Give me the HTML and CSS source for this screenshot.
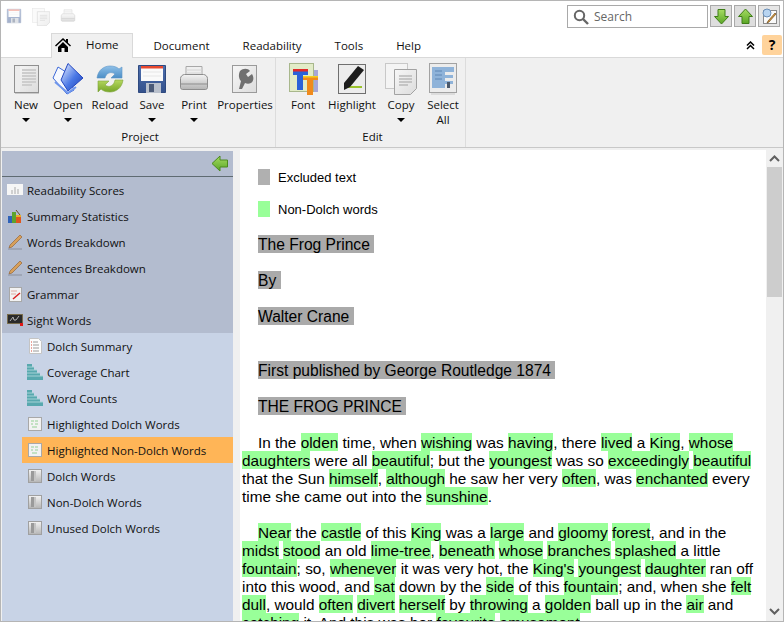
FILE: index.html
```html
<!DOCTYPE html>
<html lang="en">
<head>
  <meta charset="UTF-8" />
  <title>Readability Studio</title>
  <link rel="stylesheet" href="styles.css">
</head>
<body>

  <svg class="defs" width="0" height="0">
    <defs>
      <linearGradient id="gPage" x1="0" y1="0" x2="1" y2="1"><stop offset="0" stop-color="#f7f7f7"/><stop offset="1" stop-color="#dcdcdc"/></linearGradient>
      <linearGradient id="gBlue" x1="0" y1="0" x2="1" y2="1"><stop offset="0" stop-color="#eef3ff"/><stop offset=".55" stop-color="#4a78e6"/><stop offset="1" stop-color="#1c3fb0"/></linearGradient>
      <linearGradient id="gSky" x1="0" y1="0" x2="0" y2="1"><stop offset="0" stop-color="#8fc0e8"/><stop offset="1" stop-color="#4c8ec6"/></linearGradient>
      <linearGradient id="gLime" x1="0" y1="0" x2="0" y2="1"><stop offset="0" stop-color="#b6d860"/><stop offset="1" stop-color="#76a528"/></linearGradient>
      <linearGradient id="gGrey" x1="0" y1="0" x2="0" y2="1"><stop offset="0" stop-color="#f4f4f4"/><stop offset="1" stop-color="#b4b4b4"/></linearGradient>
      <linearGradient id="gFloppy" x1="0" y1="0" x2="0" y2="1"><stop offset="0" stop-color="#4d6fae"/><stop offset="1" stop-color="#34518c"/></linearGradient>
      <linearGradient id="gArrow" x1="0" y1="0" x2="0" y2="1"><stop offset="0" stop-color="#a6dc62"/><stop offset="1" stop-color="#5aa626"/></linearGradient>

      <symbol id="i-new" viewBox="0 0 32 32">
        <rect x="4.500" y="2.500" width="24" height="27" fill="url(#gPage)" stroke="#909090"/>
        <rect x="5" y="3" width="5" height="26" fill="#ececec"/>
        <path d="M12 7h14M12 10h14M12 13h14M12 16h14M12 19h14M12 22h10" stroke="#cdcdcd" stroke-width="2"/>
        <path d="M5 30.500h24" stroke="#c8c8c8"/>
      </symbol>
      <symbol id="i-open" viewBox="0 0 32 32">
        <path d="M1 15 6 4l8 5 8 18-7 4z" fill="#f6f9ff" stroke="#3c68d8"/>
        <path d="M16 .5 31 15 16 28 9 17z" fill="url(#gBlue)" stroke="#2447c0"/>
        <path d="M3 19l13 11 8-6" fill="none" stroke="#6f96ec" stroke-width="2"/>
      </symbol>
      <symbol id="i-reload" viewBox="0 0 32 32">
        <path d="M3 15C4 7 10 3 16 3c4 0 7 1 9 3l3-2v11H17l4-4c-4-3-9-1-10 4z" fill="url(#gSky)" stroke="#5b94c6" stroke-width=".6"/>
        <path d="M29 17c-1 8-7 12-13 12-4 0-7-1-9-3l-3 3V18h11l-4 4c4 3 9 1 10-5z" fill="url(#gLime)" stroke="#7ea53a" stroke-width=".6"/>
      </symbol>
      <symbol id="i-save" viewBox="0 0 32 32">
        <path d="M2.500 2.500h27v27h-27z" fill="url(#gFloppy)" stroke="#2f4a80"/>
        <rect x="5" y="3" width="22" height="15" fill="#fafafa"/>
        <rect x="5" y="3" width="22" height="2.500" fill="#e8492f"/>
        <path d="M7 9h18M7 13h18" stroke="#e6e6e6"/>
        <rect x="10" y="20" width="15" height="10" fill="#b9c0cc"/>
        <rect x="13" y="21" width="5" height="8" fill="#4b5a78"/>
      </symbol>
      <symbol id="i-print" viewBox="0 0 32 32">
        <path d="M8 3.500h16v12H8z" fill="#efefef" stroke="#a8a8a8"/>
        <path d="M2.500 15.500c0-2 2-4 4-4h19c2 0 4 2 4 4v9c0 1-1 2-2 2h-23c-1 0-2-1-2-2z" fill="url(#gGrey)" stroke="#8d8d8d"/>
        <path d="M3 21h26" stroke="#8d8d8d"/>
        <path d="M8 7h16M8 10h16" stroke="#d4d4d4"/>
      </symbol>
      <symbol id="i-props" viewBox="0 0 32 32">
        <rect x="3.500" y="2.500" width="24" height="27" fill="url(#gPage)" stroke="#9a9a9a"/>
        <path d="M11 8c3-3 8-3 10 0l-4 3 2 3 4-3c2 3 2 7-1 9-2 1-4 1-6 0l-3 6h-3l2-8c-2-2-3-6-1-10z" fill="#707070"/>
      </symbol>
      <symbol id="i-font" viewBox="0 0 32 32">
        <rect x="2.500" y=".5" width="24" height="28" fill="#e2ecc8" stroke="#a8b78c"/>
        <rect x="27" y="7" width="4" height="22" fill="#a7a7d8"/>
        <path d="M6 6h15v6h-5v15h-6V12H6z" fill="#2a62d8"/>
        <path d="M6 6h15v2.500H6z" fill="#e02a2a"/>
        <path d="M16 13h15v4h-5v15h-6V17h-4z" fill="#f08a1c"/>
        <path d="M16 13h15v1.500H16z" fill="#f4d020"/>
      </symbol>
      <symbol id="i-highlight" viewBox="0 0 32 32">
        <rect x="2.500" y="1.500" width="27" height="29" fill="#ececec" stroke="#6f6f6f"/>
        <path d="M15 23h11v2H9z" fill="#9ac22c"/>
        <path d="M22 3l6 4-14 17-6 3v-7z" fill="#1d1d1d"/>
      </symbol>
      <symbol id="i-copy" viewBox="0 0 32 32">
        <rect x=".5" y=".5" width="22" height="25" fill="#f4f4f4" stroke="#c8c8c8"/>
        <path d="M9.500 6.500h22v19l-6 6h-16z" fill="url(#gPage)" stroke="#a2a2a2"/>
        <path d="M14 13h13M14 16h13M14 19h13M14 22h9" stroke="#b9b9b9" stroke-width="1.500"/>
      </symbol>
      <symbol id="i-select" viewBox="0 0 32 32">
        <rect x="2.500" y=".5" width="27" height="29" fill="#ececec" stroke="#a2a2a2"/>
        <path d="M5 4h22v5H18v3h8v3h-8v3h8v3h-8v4H5z" fill="#8fb3d9"/>
        <path d="M8 8h7M8 12h7M8 16h7" stroke="#5f86b4"/>
        <path d="M20 19h3v6h-3z" fill="#4c5a6c"/>
        <path d="M4 31h24" stroke="#c8c8c8"/>
      </symbol>

      <symbol id="s-chart" viewBox="0 0 16 16">
        <rect y="2" width="16" height="11" fill="#f6f6f6"/>
        <path d="M5 12V8M8 12V5M11 12V7" stroke="#c4c4c4" stroke-width="1.500"/>
      </symbol>
      <symbol id="s-stats" viewBox="0 0 16 16">
        <rect x="1" y="8" width="4" height="7" fill="#2f62b8"/>
        <rect x="5" y="4" width="4" height="11" fill="#5ea32c"/>
        <rect x="9" y="9" width="5" height="6" fill="#e0561c"/>
        <path d="M9 2l4 5" stroke="#6a4a20"/>
        <rect x="9" y="7" width="5" height="2" fill="#e8b02a"/>
      </symbol>
      <symbol id="s-pencil" viewBox="0 0 16 16">
        <path d="M13 1l2 2L5 13l-3 1 1-3z" fill="#d8a05a" stroke="#8c5a2c" stroke-width=".6"/>
        <path d="M1 15h14" stroke="#8a8f9c"/>
      </symbol>
      <symbol id="s-grammar" viewBox="0 0 16 16">
        <rect x="2.500" y="1.500" width="12" height="14" fill="#f2f2f2" stroke="#a8a8a8"/>
        <path d="M4 5h6M4 8h5" stroke="#e0a8a0"/>
        <path d="M6 13l7-6" stroke="#d81e1e" stroke-width="1.500"/>
      </symbol>
      <symbol id="s-sight" viewBox="0 0 16 16">
        <rect x=".5" y="2.500" width="15" height="9" fill="#2a2a2a" stroke="#7a6a40" stroke-width=".8"/>
        <path d="M3 9l3-4 1 3 2 0 3-4" stroke="#b4b4b4" fill="none"/>
        <rect x="13" y="11" width="3" height="3" fill="#e01818"/>
      </symbol>
      <symbol id="s-doc" viewBox="0 0 16 16">
        <path d="M2.500 .5h9l3 3v12h-12z" fill="#fdfdfd" stroke="#c4c4c4"/>
        <path d="M4 4h1M4 7h1M4 10h1M4 13h1" stroke="#d84a3a"/>
        <path d="M6 4h5M6 7h6M6 10h6M6 13h6" stroke="#9a9a9a"/>
      </symbol>
      <symbol id="s-steps" viewBox="0 0 16 16">
        <path d="M0 0h5v3h2v3h3v3h3v3h3v4H0z" fill="#58a8ae"/>
        <path d="M0 3h7M0 6h10M0 9h13M0 12h16" stroke="#a5d2d6"/>
      </symbol>
      <symbol id="s-high" viewBox="0 0 16 16">
        <rect x="1.500" y="1.500" width="13" height="13" fill="#f2f2f2" stroke="#a8a8a8"/>
        <path d="M4 5h3M8 5h3M4 8h2M8 8h3M5 11h5" stroke="#b4dcb4" stroke-width="1.500"/>
      </symbol>
      <symbol id="s-list" viewBox="0 0 16 16">
        <rect x="1.500" y="1.500" width="13" height="13" fill="url(#gGrey)" stroke="#a0a0a0"/>
        <path d="M4 3h3v10H4z" fill="#9a9a9a"/>
        <path d="M7 3h2v10H7z" fill="#c4c4c4"/>
      </symbol>
    </defs>
  </svg>

  <div class="window">

    <div class="topbar">
      <svg class="quick fade" width="16" height="16"><use href="#i-save"/></svg>
      <svg class="quick fade" width="18" height="18"><use href="#i-copy"/></svg>
      <svg class="quick fade" width="16" height="16"><use href="#i-print"/></svg>
      <div class="search">
        <svg width="16" height="16" viewBox="0 0 16 16">
          <circle cx="6.500" cy="6.500" r="4.700" fill="none" stroke="#666" stroke-width="2"/>
          <path d="M10 10l5 5" stroke="#666" stroke-width="2.400"/>
        </svg>
        <span>Search</span>
      </div>
      <button class="tool-btn">
        <svg width="17" height="17" viewBox="0 0 17 17"><path d="M5 1.500h7v7h3.500l-7 7.500-7-7.500H5z" fill="url(#gArrow)" stroke="#3f7d18"/></svg>
      </button>
      <button class="tool-btn">
        <svg width="17" height="17" viewBox="0 0 17 17"><path d="M5 15.500h7v-7h3.500l-7-7.500-7 7.500H5z" fill="url(#gArrow)" stroke="#3f7d18"/></svg>
      </button>
      <button class="tool-btn">
        <svg width="18" height="18" viewBox="0 0 18 18">
          <rect x="3.500" y="3.500" width="13" height="13" fill="#fafafa" stroke="#8a8a8a"/>
          <circle cx="7" cy="6" r="4" fill="#b8d4f0" stroke="#6a8fb8"/>
          <path d="M16 7l-7 8-2 1 1-2 7-8z" fill="#d89a3c" stroke="#5a3a10" stroke-width=".6"/>
        </svg>
      </button>
    </div>

    <div class="tabs">
      <div class="tab tab-home">
        <svg width="16" height="16" viewBox="0 0 16 16"><path d="M8 1 0 8.500l1 1L8 3l7 6.500 1-1-3-2.800V2h-2v1.800zM3 10v5h3.500v-4h3v4H13v-5L8 5z" fill="#000"/></svg>
        <span>Home</span>
      </div>
      <div class="tab">Document</div>
      <div class="tab">Readability</div>
      <div class="tab">Tools</div>
      <div class="tab">Help</div>
      <div class="tab-right">
        <svg width="9" height="9" viewBox="0 0 9 9"><path d="M1 4.500 4.500 1 8 4.500M1 8l3.500-3.500L8 8" fill="none" stroke="#000" stroke-width="1.500"/></svg>
        <div class="help-btn">?</div>
      </div>
    </div>

    <div class="ribbon">
      <div class="group group-project">
        <div class="group-btns">
          <div class="rbtn w42"><svg class="ricon"><use href="#i-new"/></svg><span>New</span><i class="caret"></i></div>
          <div class="rbtn w42"><svg class="ricon"><use href="#i-open"/></svg><span>Open</span><i class="caret"></i></div>
          <div class="rbtn w42"><svg class="ricon"><use href="#i-reload"/></svg><span>Reload</span></div>
          <div class="rbtn w42"><svg class="ricon"><use href="#i-save"/></svg><span>Save</span><i class="caret"></i></div>
          <div class="rbtn w42"><svg class="ricon"><use href="#i-print"/></svg><span>Print</span><i class="caret"></i></div>
          <div class="rbtn w60"><svg class="ricon"><use href="#i-props"/></svg><span>Properties</span></div>
        </div>
        <div class="group-label">Project</div>
      </div>
      <div class="group group-edit">
        <div class="group-btns">
          <div class="rbtn w46"><svg class="ricon"><use href="#i-font"/></svg><span>Font</span></div>
          <div class="rbtn w52"><svg class="ricon"><use href="#i-highlight"/></svg><span>Highlight</span></div>
          <div class="rbtn w46"><svg class="ricon"><use href="#i-copy"/></svg><span>Copy</span><i class="caret"></i></div>
          <div class="rbtn w38"><svg class="ricon"><use href="#i-select"/></svg><span>Select All</span></div>
        </div>
        <div class="group-label">Edit</div>
      </div>
    </div>

    <div class="main">
      <div class="sidebar">
        <div class="side-head">
          <svg width="18" height="17" viewBox="0 0 18 17"><path d="M16.500 5H9V1L1 8.500 9 16v-4h7.500z" fill="url(#gArrow)" stroke="#4c8a1e"/></svg>
        </div>
        <div class="nav-top">
          <div class="nav-item"><svg width="16" height="16"><use href="#s-chart"/></svg>Readability Scores</div>
          <div class="nav-item"><svg width="16" height="16"><use href="#s-stats"/></svg>Summary Statistics</div>
          <div class="nav-item"><svg width="16" height="16"><use href="#s-pencil"/></svg>Words Breakdown</div>
          <div class="nav-item"><svg width="16" height="16"><use href="#s-pencil"/></svg>Sentences Breakdown</div>
          <div class="nav-item"><svg width="16" height="16"><use href="#s-grammar"/></svg>Grammar</div>
          <div class="nav-item"><svg width="16" height="16"><use href="#s-sight"/></svg>Sight Words</div>
        </div>
        <div class="nav-sub">
          <div class="nav-item"><svg width="16" height="16"><use href="#s-doc"/></svg>Dolch Summary</div>
          <div class="nav-item"><svg width="16" height="16"><use href="#s-steps"/></svg>Coverage Chart</div>
          <div class="nav-item"><svg width="16" height="16"><use href="#s-steps"/></svg>Word Counts</div>
          <div class="nav-item"><svg width="16" height="16"><use href="#s-high"/></svg>Highlighted Dolch Words</div>
          <div class="nav-item selected"><svg width="16" height="16"><use href="#s-high"/></svg>Highlighted Non-Dolch Words</div>
          <div class="nav-item"><svg width="16" height="16"><use href="#s-list"/></svg>Dolch Words</div>
          <div class="nav-item"><svg width="16" height="16"><use href="#s-list"/></svg>Non-Dolch Words</div>
          <div class="nav-item"><svg width="16" height="16"><use href="#s-list"/></svg>Unused Dolch Words</div>
        </div>
      </div>

      <div class="doc">
        <div class="legend"><i class="swatch grey"></i><span>Excluded text</span></div>
        <div class="legend"><i class="swatch green"></i><span>Non-Dolch words</span></div>

        <p class="excl"><span>The Frog Prince&nbsp;</span></p>
        <p class="excl"><span>By&nbsp;</span></p>
        <p class="excl"><span>Walter Crane&nbsp;</span></p>
        <p class="excl spaced"><span>First published by George Routledge 1874&nbsp;</span></p>
        <p class="excl"><span>THE FROG PRINCE&nbsp;</span></p>

        <p class="story">In the <mark>olden</mark> time, when <mark>wishing</mark> was <mark>having</mark>, there <mark>lived</mark> a <mark>King</mark>, <mark>whose</mark> <mark>daughters</mark> were all <mark>beautiful</mark>; but the <mark>youngest</mark> was so <mark>exceedingly</mark> <mark>beautiful</mark> that the Sun <mark>himself</mark>, <mark>although</mark> he saw her very <mark>often</mark>, was <mark>enchanted</mark> every time she came out into the <mark>sunshine</mark>.</p>

        <p class="story"><mark>Near</mark> the <mark>castle</mark> of this <mark>King</mark> was a <mark>large</mark> and <mark>gloomy</mark> <mark>forest</mark>, and in the <mark>midst</mark> <mark>stood</mark> an old <mark>lime-tree</mark>, <mark>beneath</mark> <mark>whose</mark> <mark>branches</mark> <mark>splashed</mark> a little <mark>fountain</mark>; so, <mark>whenever</mark> it was very hot, the <mark>King's</mark> <mark>youngest</mark> <mark>daughter</mark> ran off into this wood, and <mark>sat</mark> down by the <mark>side</mark> of this <mark>fountain</mark>; and, when she <mark>felt</mark> <mark>dull</mark>, would <mark>often</mark> <mark>divert</mark> <mark>herself</mark> by <mark>throwing</mark> a <mark>golden</mark> ball up in the <mark>air</mark> and <mark>catching</mark> it. And this was her <mark>favourite</mark> <mark>amusement</mark>.</p>
      </div>

      <div class="scrollbar">
        <svg width="11" height="7" viewBox="0 0 11 7"><path d="M1 6 5.500 1.500 10 6" fill="none" stroke="#606060" stroke-width="2"/></svg>
        <div class="track"><div class="thumb"></div></div>
        <svg width="11" height="7" viewBox="0 0 11 7"><path d="M1 1l4.500 4.500L10 1" fill="none" stroke="#606060" stroke-width="2"/></svg>
      </div>
    </div>
  </div>

</body>
</html>
```

FILE: styles.css
```css
* {
  box-sizing: border-box;
}

body {
  margin: 0;
  font-family: 'Open Sans', 'Noto Sans', sans-serif;
  font-size: 11.5px;
  color: #111;
}

.defs {
  display: block;
  height: 0;
}

.window {
  width: 784px;
  height: 622px;
  border: 1px solid #b5b5b5;
  display: flex;
  flex-direction: column;
  overflow: hidden;
  background: #fff;
}

/* top bar */
.topbar {
  height: 32px;
  flex: none;
  display: flex;
  align-items: flex-start;
  padding: 4px 3px 0 5px;
}

.quick {
  margin: 3px 10px 0 0;
}

.fade {
  opacity: 0.45;
}

.search {
  margin-left: auto;
  width: 141px;
  height: 23px;
  border: 1px solid #a9a9a9;
  display: flex;
  align-items: center;
  gap: 5px;
  padding-left: 5px;
  color: #666;
  font-size: 12px;
}

.tool-btn {
  width: 22px;
  height: 22px;
  margin-left: 2px;
  padding: 0;
  border: 1px solid #a9a9a9;
  background: #dedede;
  display: flex;
  align-items: center;
  justify-content: center;
}

.tool-btn:last-child {
  background: #e6e6e6;
}

/* tabs */
.tabs {
  height: 24px;
  flex: none;
  display: flex;
  align-items: center;
  padding-left: 50px;
}

.tab {
  padding: 0 16.5px;
}

.tab-home {
  align-self: stretch;
  height: 25px;
  width: 82px;
  margin-right: 4px;
  padding: 3px 0 0 3px;
  display: flex;
  align-items: flex-start;
  background: #f0f0f0;
  border: 1px solid #d9d9d9;
  border-bottom: none;
  position: relative;
}

.tab-home span {
  margin: 0 0 0 15px;
}

.tab-right {
  margin-left: auto;
  display: flex;
  align-items: center;
  gap: 7px;
  padding-right: 1px;
}

.help-btn {
  width: 20px;
  height: 20px;
  background: #ffd39b;
  border-radius: 2px;
  text-align: center;
  font-weight: bold;
  font-size: 14px;
  line-height: 20px;
  color: #000;
}

/* ribbon */
.ribbon {
  height: 91px;
  flex: none;
  display: flex;
  background: #f0f0f0;
  border-top: 1px solid #d9d9d9;
  border-bottom: 1px solid #c8c8c8;
  padding-left: 4px;
}

.group {
  display: flex;
  flex-direction: column;
  border-right: 1px solid #dcdcdc;
  padding-top: 5px;
}

.group-project {
  width: 271px;
}

.group-edit {
  width: 190px;
  padding-left: 4px;
}

.group-btns {
  display: flex;
  height: 64px;
}

.group-label {
  margin-top: 3px;
  text-align: center;
  line-height: 14px;
}

.rbtn {
  display: flex;
  flex-direction: column;
  align-items: center;
  text-align: center;
  line-height: 15px;
}

.w38 { width: 38px; }
.w42 { width: 42px; }
.w46 { width: 46px; }
.w52 { width: 52px; }
.w60 { width: 60px; }

.ricon {
  width: 32px;
  height: 32px;
  margin-bottom: 2px;
  flex: none;
}

.caret {
  width: 0;
  height: 0;
  margin-top: 6px;
  border-left: 4px solid transparent;
  border-right: 4px solid transparent;
  border-top: 4px solid #000;
}

/* main area */
.main {
  flex: 1;
  min-height: 0;
  display: flex;
  padding-top: 2px;
  background: #f0f0f0;
}

.sidebar {
  width: 231px;
  flex: none;
  margin: 1px 7px 0 1px;
  display: flex;
  flex-direction: column;
}

.side-head {
  height: 26px;
  flex: none;
  background: #b3bccf;
  border-bottom: 1px solid #5f6b72;
  display: flex;
  justify-content: flex-end;
  align-items: center;
  padding-right: 4px;
}

.nav-top {
  background: #b3bccf;
  flex: none;
}

.nav-sub {
  background: #c8d3e6;
  flex: 1;
  padding-left: 20px;
}

.nav-item {
  height: 26px;
  display: flex;
  align-items: center;
  gap: 4px;
  padding-left: 5px;
}

.nav-item svg {
  flex: none;
}

.nav-item.selected {
  background: #ffb557;
}

/* document */
.doc {
  width: 526px;
  flex: none;
  background: #fff;
  overflow: hidden;
  padding: 19px 6px 0 2px;
  font-family: 'Liberation Sans', Arial, sans-serif;
  font-size: 15.35px;
  line-height: 18px;
  color: #000;
}

.legend {
  height: 16px;
  margin: 0 0 16px 16px;
  display: flex;
  align-items: center;
  gap: 8px;
  font-size: 13px;
}

.legend span {
  padding-top: 2px;
}

.swatch {
  width: 12px;
  height: 16px;
}

.swatch.grey {
  background: #b0b0b0;
}

.swatch.green {
  background: #99ff99;
}

p {
  margin: 18px 0;
}

.legend + .excl {
  margin-top: 19px;
}

.excl {
  padding-left: 16px;
  font-size: 15.6px;
}

.excl span {
  padding-top: 1px;
  background: #aaa;
}

.excl.spaced {
  margin-top: 36px;
}

.story {
  text-indent: 16px;
}

mark {
  padding-top: 1px;
  background: #99ff99;
  color: #000;
}

.scrollbar {
  width: 17px;
  flex: none;
  background: #f0f0f0;
  display: flex;
  flex-direction: column;
  align-items: center;
  padding: 5px 0 6px;
}

.track {
  flex: 1;
  width: 100%;
  padding: 5px 1px 0;
}

.thumb {
  height: 130px;
  background: #cdcdcd;
}
```
